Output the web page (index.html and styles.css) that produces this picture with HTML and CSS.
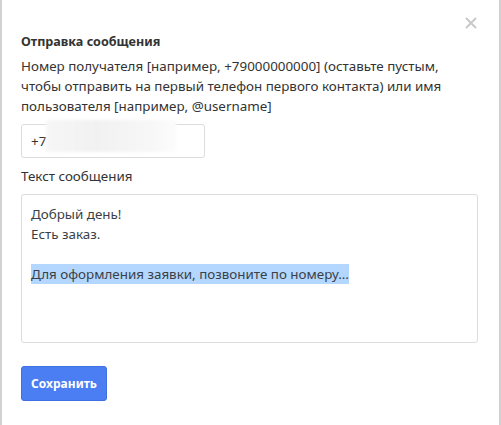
FILE: index.html
```html
<!DOCTYPE html>
<html lang="ru">
<head>
<meta charset="utf-8">
<link rel="stylesheet" href="styles.css">
</head>
<body>
<div class="modal">
  <button class="close" aria-label="Закрыть">
    <svg width="12" height="12" viewBox="0 0 12 12"><path d="M1 1L11 11M11 1L1 11" stroke="#c9c9c9" stroke-width="2" stroke-linecap="butt"/></svg>
  </button>
  <h3 class="title">Отправка сообщения</h3>
  <p class="hint">Номер получателя [например, +79000000000] (оставьте пустым, чтобы отправить на первый телефон первого контакта) или имя пользователя [например, @username]</p>
  <div class="input-wrap">
    <div class="input">+7</div>
    <div class="blur"></div>
  </div>
  <p class="label">Текст сообщения</p>
  <div class="textarea">
    <div>Добрый день!</div>
    <div>Есть заказ.</div>
    <div>&nbsp;</div>
    <div><span class="sel">Для оформления заявки, позвоните по номеру...</span></div>
  </div>
  <button class="save">Сохранить</button>
</div>
</body>
</html>
```

FILE: styles.css
```css
html, body {
  margin: 0;
  padding: 0;
  background: #fff;
}
body {
  font-family: "Noto Sans", "Open Sans", sans-serif;
  font-size: 13.4px;
  line-height: 20px;
  color: #333;
}
.modal {
  position: relative;
  box-sizing: border-box;
  height: 425px;
  border-left: 2px solid #d2d2d2;
  border-right: 2px solid #d2d2d2;
  padding: 32px 21px 0 19px;
}
.close {
  position: absolute;
  top: 17px;
  right: 22px;
  border: 0;
  background: none;
  padding: 0;
  width: 12px;
  height: 12px;
  display: block;
}
.close svg { display: block; }
.title {
  margin: 0 0 4px;
  font-size: 12.6px;
  line-height: 20px;
  font-weight: 700;
  color: #333;
}
.hint {
  margin: 0 0 8px;
}
.input-wrap {
  position: relative;
  width: 184px;
}
.input {
  box-sizing: border-box;
  height: 34px;
  border: 1px solid #dcdcdc;
  border-radius: 3px;
  padding: 6px 9px;
  color: #333;
}
.blur {
  position: absolute;
  left: 25px;
  top: -4px;
  width: 130px;
  height: 32px;
  background: linear-gradient(90deg, #f6f6f6, #f1f1f1 40%, #f7f7f7 80%, #fcfcfc);
  filter: blur(1.5px);
}
.label {
  margin: 8px 0 8px;
}
.textarea {
  box-sizing: border-box;
  height: 149px;
  border: 1px solid #dcdcdc;
  border-radius: 3px;
  padding: 9px 9px;
  color: #3a3f47;
}
.sel {
  background: #b3d7fe;
  display: inline-block;
  line-height: 20px;
}
.save {
  margin-top: 23px;
  display: block;
  height: 35px;
  width: 86px;
  border: 1px solid #3f6fe0;
  border-radius: 3px;
  background: #4c7ef3;
  color: #fff;
  font-family: "Noto Sans", "Open Sans", sans-serif;
  font-weight: 700;
  font-size: 12px;
  padding: 0;
}
```
